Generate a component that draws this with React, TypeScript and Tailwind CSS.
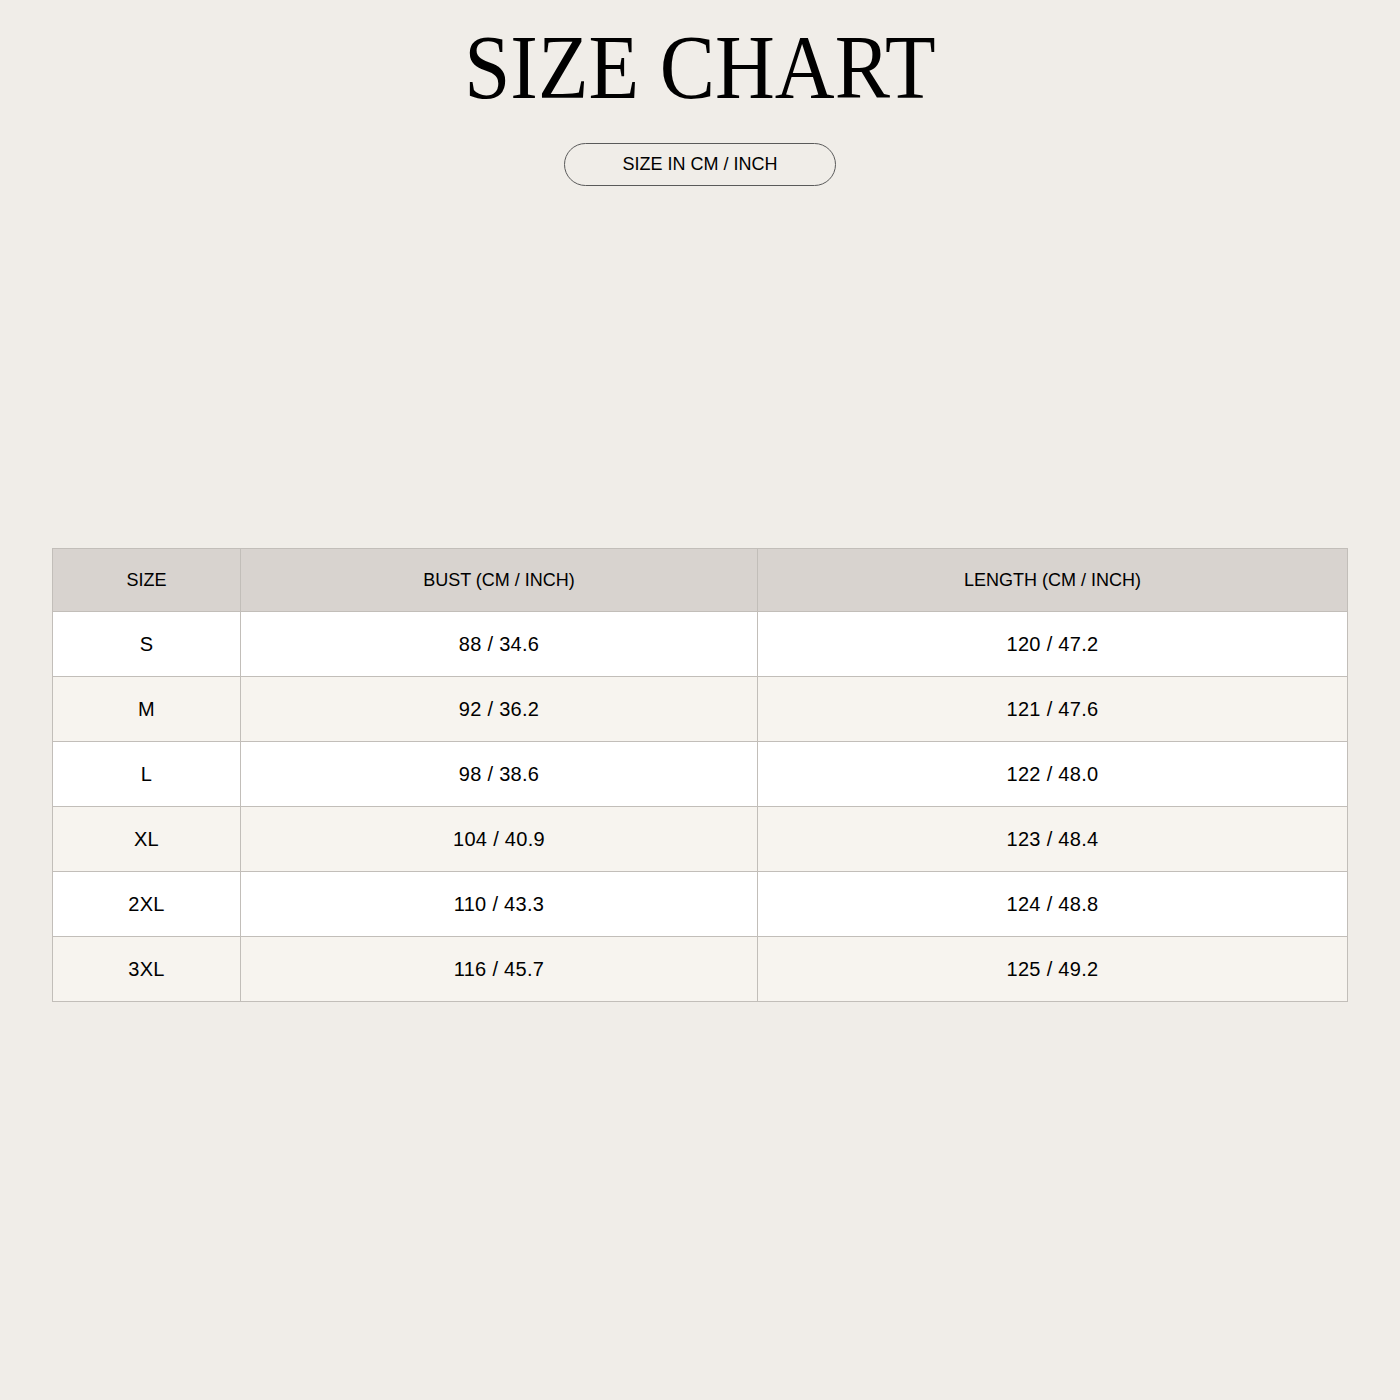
import React from 'react';

const rows = [
  { size: 'S', bust: '88 / 34.6', length: '120 / 47.2' },
  { size: 'M', bust: '92 / 36.2', length: '121 / 47.6' },
  { size: 'L', bust: '98 / 38.6', length: '122 / 48.0' },
  { size: 'XL', bust: '104 / 40.9', length: '123 / 48.4' },
  { size: '2XL', bust: '110 / 43.3', length: '124 / 48.8' },
  { size: '3XL', bust: '116 / 45.7', length: '125 / 49.2' },
];

const App: React.FC = () => {
  return (
    <div className="min-h-[1400px] bg-[#f0ede8] flex flex-col items-center text-black font-['Liberation_Sans',Arial,sans-serif]">
      <h1 className="mt-[22px] text-[91px] leading-none scale-x-[0.91] font-['Liberation_Serif','Times_New_Roman',serif] text-black">
        SIZE CHART
      </h1>
      <div className="mt-[30px] w-[272px] h-[43px] rounded-full border border-[#5a5a5a] flex items-center justify-center text-[18px]">
        SIZE IN CM / INCH
      </div>

      <div className="mt-[362px] w-full px-[52px]">
        <table className="w-full border-collapse border border-[#c2beb9] table-fixed">
          <colgroup>
            <col className="w-[188px]" />
            <col className="w-[517px]" />
            <col />
          </colgroup>
          <thead>
            <tr className="bg-[#d8d3cf] h-[63px] text-[18px]">
              <th className="font-normal border border-[#c2beb9]">SIZE</th>
              <th className="font-normal border border-[#c2beb9]">BUST (CM / INCH)</th>
              <th className="font-normal border border-[#c2beb9]">LENGTH (CM / INCH)</th>
            </tr>
          </thead>
          <tbody className="text-[20px] tracking-[0.015em]">
            {rows.map((r, i) => (
              <tr key={r.size} className={`h-[65px] ${i % 2 === 0 ? 'bg-white' : 'bg-[#f7f4ef]'}`}>
                <td className="text-center border border-[#c2beb9]">{r.size}</td>
                <td className="text-center border border-[#c2beb9]">{r.bust}</td>
                <td className="text-center border border-[#c2beb9]">{r.length}</td>
              </tr>
            ))}
          </tbody>
        </table>
      </div>
    </div>
  );
};

export default App;
